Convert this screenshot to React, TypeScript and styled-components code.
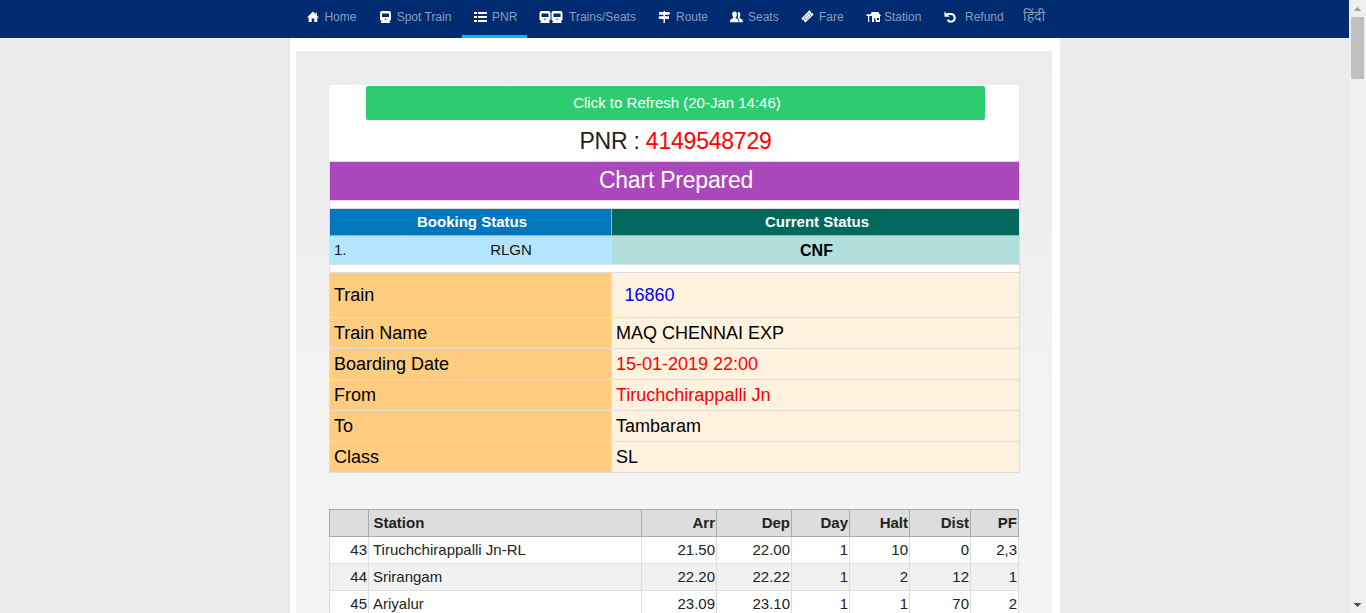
import React from "react";
import styled, { createGlobalStyle } from "styled-components";

const GlobalStyle = createGlobalStyle`
  *, *::before, *::after { box-sizing: border-box; }
  html, body { margin: 0; height: 613px; overflow: hidden; background: #ebebeb; }
  body { font-family: "Liberation Sans", Arial, "Noto Sans", sans-serif; color: #222; }
`;

const Screen = styled.div`
  display: grid;
  grid-template-columns: 1349px 17px;
  height: 613px;
  overflow: hidden;
`;

const Page = styled.div`
  display: flex;
  flex-direction: column;
  min-width: 0;
  height: 613px;
  overflow: hidden;
`;

const NavBar = styled.nav`
  display: flex;
  flex: none;
  height: 38px;
  padding-left: 295px;
  background: #002b71;
`;

const NavItem = styled.a<{ $width: number; $active?: boolean }>`
  display: flex;
  flex: none;
  width: ${(p) => p.$width}px;
  height: 38px;
  padding: 0 0 2px 12px;
  align-items: center;
  border-bottom: 3px solid ${(p) => (p.$active ? "#00b9f5" : "transparent")};
  font-size: 12px;
  line-height: 14px;
  color: #8c9cbd;
  white-space: nowrap;
`;

const IconSlot = styled.span<{ $width: number }>`
  display: flex;
  flex: none;
  width: ${(p) => p.$width}px;
  color: #fff;
`;

const HindiLink = styled.a`
  padding: 7px 0 0 10px;
  font-family: "Noto Sans", "Noto Sans Devanagari", sans-serif;
  font-size: 14px;
  line-height: 18px;
  color: #8c9cbd;
`;

const Sheet = styled.main`
  flex: 1;
  width: 770px;
  margin-left: 290px;
  padding: 13px 8px 0 6px;
  background: #fff;
`;

const Panel = styled.section`
  height: 562px;
  padding: 34px 32px 0 33px;
  background: linear-gradient(to bottom, #ececed 0, #f3f3f3 400px, #f4f4f4 100%);
`;

const PnrCard = styled.div`
  width: 691px;
`;

const PnrHead = styled.header`
  width: 690px;
  height: 76px;
  padding: 1px 0 0 37px;
  background: #fff;
`;

const RefreshButton = styled.button`
  display: block;
  width: 619px;
  height: 34px;
  padding: 0 0 0 3px;
  border: 0;
  border-radius: 2px;
  background: #2ecc71;
  color: #fff;
  font: 15px/34px "Liberation Sans", Arial, sans-serif;
`;

const PnrTitle = styled.h1`
  width: 619px;
  margin: 0;
  padding-top: 6px;
  font-size: 23px;
  font-weight: 400;
  letter-spacing: -0.22px;
  line-height: 30px;
  text-align: center;
`;

const PnrNumber = styled.span`
  color: #f00;
`;

const StatusTable = styled.div`
  border: 1px solid #ddd;
  background: #fff;
`;

const ChartBanner = styled.div`
  height: 38px;
  padding-left: 3px;
  background: #ab47bc;
  color: #fff;
  font-size: 23px;
  letter-spacing: -0.22px;
  line-height: 36px;
  text-align: center;
`;

const Spacer = styled.div`
  height: 9px;
  border: solid #ddd;
  border-width: 1px 0;
`;

const StatusRow = styled.div<{ $height: number; $line?: string }>`
  display: grid;
  grid-template-columns: 282px 407px;
  height: ${(p) => p.$height}px;
  border-bottom: ${(p) => (p.$line ? `1px solid ${p.$line}` : "0")};
`;

const StatusHead = styled.div<{ $bg: string; $divided?: boolean }>`
  border-right: ${(p) => (p.$divided ? "1px solid #aaa" : "0")};
  padding-left: 3px;
  background: ${(p) => p.$bg};
  color: #fff;
  font-size: 15px;
  font-weight: 700;
  line-height: 26px;
  text-align: center;
`;

const Booking = styled.div`
  display: grid;
  grid-template-columns: 78px 1fr;
  border-right: 1px solid #ddd;
  background: #b3e5fc;
  font-size: 15px;
  line-height: 28px;
  color: #111;
`;

const Ordinal = styled.span`
  padding-left: 4px;
  border-right: 1px solid #c9e2f0;
`;

const BookingCode = styled.span`
  padding-left: 3px;
  text-align: center;
`;

const CurrentCode = styled.div`
  padding: 1px 0 0 2px;
  background: #b2dfdb;
  color: #000;
  font-size: 16px;
  font-weight: 700;
  line-height: 27px;
  text-align: center;
`;

const DetailRow = styled.div<{ $height: number }>`
  display: grid;
  grid-template-columns: 282px 407px;
  height: ${(p) => p.$height}px;
  border-bottom: 1px solid #ddd;
  font-size: 18px;
  line-height: ${(p) => p.$height - 1}px;
  color: #000;
  &:last-child { height: ${(p) => p.$height - 1}px; border-bottom: 0; }
`;

const DetailName = styled.div`
  padding-left: 4px;
  border-right: 1px solid #ddd;
  background: #ffcc80;
`;

const DetailValue = styled.div<{ $color?: string; $inset?: number }>`
  padding-left: ${(p) => p.$inset ?? 4}px;
  background: #fff2df;
  color: ${(p) => p.$color ?? "#000"};
`;

const RouteTable = styled.table`
  width: 690px;
  margin-top: 36px;
  border-collapse: separate;
  border-spacing: 0;
  table-layout: fixed;
  font-size: 15px;
`;

const RouteHead = styled.th<{ $left?: boolean }>`
  height: 28px;
  padding: 0 1px 0 4.5px;
  border: solid #aaa;
  border-width: 1px 1px 1px 0;
  background: #ddd;
  line-height: 26px;
  text-align: ${(p) => (p.$left ? "left" : "right")};
  &:first-child { border-left-width: 1px; }
`;

const RouteRow = styled.tr`
  background: #fff;
  &:nth-child(even) { background: #f1f1f1; }
`;

const RouteCell = styled.td<{ $left?: boolean }>`
  height: 27px;
  padding: 0 1px 0 4px;
  border: solid #ddd;
  border-width: 0 1px 1px 0;
  line-height: 26px;
  text-align: ${(p) => (p.$left ? "left" : "right")};
  &:first-child { border-left-width: 1px; }
`;

const ScrollBar = styled.aside`
  display: flex;
  flex-direction: column;
  align-items: center;
  height: 613px;
  background: #f0f0f0;
`;

const ScrollArrow = styled.span`
  display: flex;
  flex: none;
  height: 17px;
  align-items: center;
`;

const ScrollTrack = styled.span`
  flex: 1;
`;

const ScrollThumb = styled.span`
  display: block;
  width: 13px;
  height: 62px;
  background: #c1c1c1;
`;

const HomeIcon = () => (
  <svg width="12" height="12" viewBox="0 0 12 12" fill="currentColor">
    <path d="M6 .6 0 6.600h1.700V11h3V7.500h2.600V11h3V6.600H12L9.800 4.400V1.600H8.600v1.600z" />
  </svg>
);

const train = "M3 0h7q2 0 2 2v6q0 2-1.800 2.100l1.300 1.900H1.500l1.300-1.900Q1 10 1 8V2q0-2 2-2zM3 2.600v3.400h7V2.600zM6.500 7.500a.7.700 0 1 0 0 1.400.7.700 0 0 0 0-1.400z";

const TrainIcon = () => (
  <svg width="12" height="12" viewBox="0 0 12 12" fill="currentColor">
    <path fillRule="evenodd" d={train} />
  </svg>
);

const TrainsIcon = () => (
  <svg width="24" height="12" viewBox="0.500 0 24 12" fill="currentColor">
    <path fillRule="evenodd" d={train} />
    <path fillRule="evenodd" d={train} transform="translate(12 0)" />
  </svg>
);

const ListIcon = () => (
  <svg width="13" height="12" viewBox="0 0 13 12" fill="currentColor">
    <path d="M0 1h3v2H0zM4 1h9v2H4zM0 5h3v2H0zM4 5h9v2H4zM0 9h3v2H0zM4 9h9v2H4z" />
  </svg>
);

const SignIcon = () => (
  <svg width="13" height="12" viewBox="0 0 13 12" fill="currentColor">
    <path d="M5.500 0h1.500v1H11l1.200 1.300L11 3.700H7v1.600h4v2.600H7V12H5.500V7.900H1.500L.3 6.600 1.500 5.300h4V3.700H1V1h4.500z" />
  </svg>
);

const UsersIcon = () => (
  <svg width="13" height="12" viewBox="0 0 13 12" fill="currentColor">
    <path d="M4.600.5C6.200.5 6.900 1.600 6.900 3.200c0 1.300-.5 2.300-1.200 3v.7c1.500.7 2.800 1.700 2.800 3.100v1.200H0V10c0-1.400 1.700-2.400 3.300-3.100v-.7C2.600 5.500 2.200 4.500 2.200 3.200 2.200 1.600 3 .5 4.600.5z" />
    <path d="M7.700 1.200C9.100.8 10.300 1.700 10.300 3.300c0 1.200-.3 2.200-.8 2.900v.7c1.600.6 3.300 1.700 3.300 3.100v1.200H9.100V10c0-1.300-.5-2.300-1.500-3.100C8.200 5.200 8.300 2.800 7.700 1.200z" />
  </svg>
);

const TicketIcon = () => (
  <svg width="13" height="13" viewBox="0 0 13 13" fill="currentColor">
    <path fillRule="evenodd" d="M8.500.3 9.900 1.700c-.3.9.4 1.600 1.300 1.300l1.400 1.400-8.200 8.200L3 11.200c.3-.9-.4-1.600-1.300-1.300L.3 8.500zM8.100 2.900 2.900 8.100l2 2 5.200-5.200z" />
    <path d="M8.100 3.400 3.400 8.100l1.500 1.500 4.700-4.700z" />
  </svg>
);

const StationIcon = () => (
  <svg width="15" height="12" viewBox="0 0 15 12" fill="currentColor">
    <path fillRule="evenodd" d="M5.500 1h7.200v1l2 2.200V5H14v6H6V5H3.200v6H2V5H.5V3.300H4.800zM8 7.500V11h1.500V7.500zM11 7v2h2V7z" />
  </svg>
);

const UndoIcon = () => (
  <svg width="13" height="12" viewBox="0 0 13 12" fill="none" stroke="currentColor">
    <path d="M3 3h3.800a3.800 3.800 0 1 1-3.200 5.700" strokeWidth="2" />
    <path d="M.5.500v5.200h5.200z" fill="currentColor" stroke="none" />
  </svg>
);

const navItems = [
  { label: "Home", Icon: HomeIcon, width: 72, slot: 17.4 },
  { label: "Spot Train", Icon: TrainIcon, width: 95, slot: 17.7 },
  { label: "PNR", Icon: ListIcon, width: 65, slot: 18, active: true },
  { label: "Trains/Seats", Icon: TrainsIcon, width: 119, slot: 30 },
  { label: "Route", Icon: SignIcon, width: 72, slot: 18 },
  { label: "Seats", Icon: UsersIcon, width: 71, slot: 18 },
  { label: "Fare", Icon: TicketIcon, width: 65, slot: 18 },
  { label: "Station", Icon: StationIcon, width: 78, slot: 18 },
  { label: "Refund", Icon: UndoIcon, width: 81, slot: 21 },
];

const details = [
  { name: "Train", value: "16860", color: "#00f", inset: 12.5, height: 45 },
  { name: "Train Name", value: "MAQ CHENNAI EXP", height: 31 },
  { name: "Boarding Date", value: "15-01-2019 22:00", color: "#f00", height: 31 },
  { name: "From", value: "Tiruchchirappalli Jn", color: "#f00", height: 31 },
  { name: "To", value: "Tambaram", height: 31 },
  { name: "Class", value: "SL", height: 31 },
];

const columnWidths = [40, 273, 75, 75, 58, 60, 61, 48];
const headings = ["", "Station", "Arr", "Dep", "Day", "Halt", "Dist", "PF"];
const stops = [
  ["43", "Tiruchchirappalli Jn-RL", "21.50", "22.00", "1", "10", "0", "2,3"],
  ["44", "Srirangam", "22.20", "22.22", "1", "2", "12", "1"],
  ["45", "Ariyalur", "23.09", "23.10", "1", "1", "70", "2"],
];

export default function App() {
  return (
    <Screen>
      <GlobalStyle />
      <Page>
        <NavBar>
          {navItems.map(({ label, Icon, width, slot, active }) => (
            <NavItem key={label} $width={width} $active={active}>
              <IconSlot $width={slot}><Icon /></IconSlot>
              {label}
            </NavItem>
          ))}
          <HindiLink>हिंदी</HindiLink>
        </NavBar>
        <Sheet>
          <Panel>
            <PnrCard>
              <PnrHead>
                <RefreshButton>Click to Refresh (20-Jan 14:46)</RefreshButton>
                <PnrTitle>PNR : <PnrNumber>4149548729</PnrNumber></PnrTitle>
              </PnrHead>
              <StatusTable>
                <ChartBanner>Chart Prepared</ChartBanner>
                <Spacer />
                <StatusRow $height={27} $line="#aaa">
                  <StatusHead $bg="#0277bd" $divided>Booking Status</StatusHead>
                  <StatusHead $bg="#00695c">Current Status</StatusHead>
                </StatusRow>
                <StatusRow $height={28}>
                  <Booking>
                    <Ordinal>1.</Ordinal>
                    <BookingCode>RLGN</BookingCode>
                  </Booking>
                  <CurrentCode>CNF</CurrentCode>
                </StatusRow>
                <Spacer />
                {details.map((d) => (
                  <DetailRow key={d.name} $height={d.height}>
                    <DetailName>{d.name}</DetailName>
                    <DetailValue $color={d.color} $inset={d.inset}>{d.value}</DetailValue>
                  </DetailRow>
                ))}
              </StatusTable>
            </PnrCard>
            <RouteTable>
              <colgroup>
                {columnWidths.map((w, i) => <col key={i} width={w} />)}
              </colgroup>
              <thead>
                <tr>
                  {headings.map((h, i) => <RouteHead key={i} $left={i === 1}>{h}</RouteHead>)}
                </tr>
              </thead>
              <tbody>
                {stops.map((row) => (
                  <RouteRow key={row[0]}>
                    {row.map((cell, i) => <RouteCell key={i} $left={i === 1}>{cell}</RouteCell>)}
                  </RouteRow>
                ))}
              </tbody>
            </RouteTable>
          </Panel>
        </Sheet>
      </Page>
      <ScrollBar>
        <ScrollArrow>
          <svg width="7" height="4" viewBox="0 0 7 4" fill="#a3a3a3"><path d="M3 0h1v1h1v1h1v1h1v1H0V3h1V2h1V1h1z" /></svg>
        </ScrollArrow>
        <ScrollThumb />
        <ScrollTrack />
        <ScrollArrow>
          <svg width="7" height="4" viewBox="0 0 7 4" fill="#505050"><path d="M0 0h7v1H6v1H5v1H4v1H3V3H2V2H1V1H0z" /></svg>
        </ScrollArrow>
      </ScrollBar>
    </Screen>
  );
}
